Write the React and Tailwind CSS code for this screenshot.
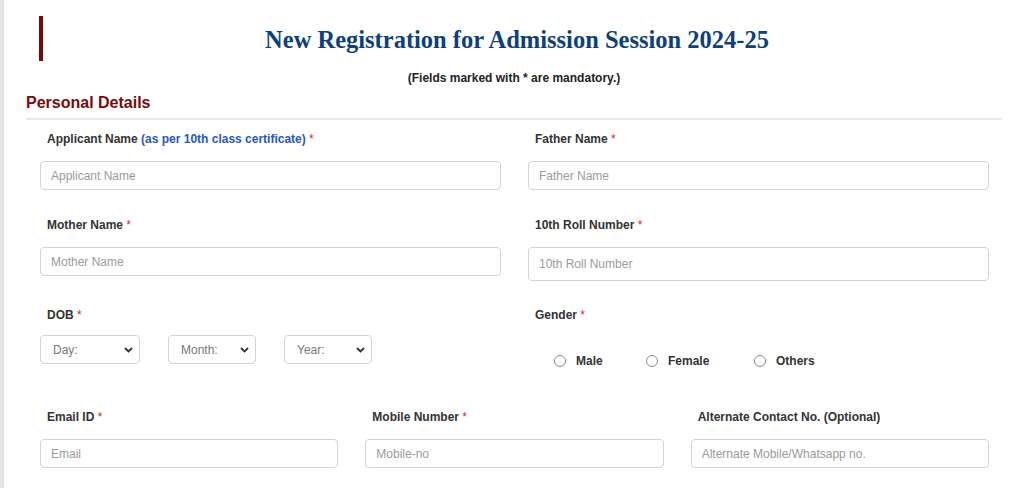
import React from 'react';

const Req = () => <span className="text-[#e02424] font-normal"> *</span>;

const Label = ({ children, className = '' }) => (
    <label className={`block pl-[7px] text-[12px] leading-[14px] font-bold text-[#333] ${className}`}>{children}</label>
);

const TextInput = ({ placeholder, className = 'h-[29px]' }) => (
    <input
        type="text"
        placeholder={placeholder}
        className={`block w-full ${className} rounded-[4px] border border-[#d4d4d4] bg-white px-[10px] text-[12px] text-[#333] placeholder:text-[#9a9a9a] outline-none`}
    />
);

const Chevron = () => (
    <svg className="pointer-events-none absolute right-[7px] top-1/2 -translate-y-1/2" width="9" height="6" viewBox="0 0 9 6">
        <path d="M1 1l3.5 3.5L8 1" fill="none" stroke="#333" strokeWidth="1.8" />
    </svg>
);

const DateSelect = ({ label, width, options }) => (
    <div className={`relative ${width}`}>
        <select className="block h-[29px] w-full appearance-none rounded-[4px] border border-[#d4d4d4] bg-white pl-[12px] text-[12px] text-[#777] outline-none">
            <option>{label}</option>
            {options.map((o) => <option key={o}>{o}</option>)}
        </select>
        <Chevron />
    </div>
);

const Radio = ({ name, label, className = '' }) => (
    <label className={`flex items-center gap-[10px] text-[12px] font-bold text-[#333] ${className}`}>
        <span className="block h-[12px] w-[12px] rounded-full border border-[#8a8a8a] bg-white"></span>
        <input type="radio" name={name} className="hidden" />
        {label}
    </label>
);

const days = Array.from({ length: 31 }, (_, i) => i + 1);
const months = ['Jan', 'Feb', 'Mar', 'Apr', 'May', 'Jun', 'Jul', 'Aug', 'Sep', 'Oct', 'Nov', 'Dec'];
const years = Array.from({ length: 20 }, (_, i) => 2012 - i);

export default function App() {
    return (
        <div className="min-h-[488px] bg-white border-l-4 border-[#e3e5e9]" style={{ fontFamily: '"Liberation Sans", Arial, sans-serif' }}>
            {/* Encabezado */}
            <div className="flex items-start pt-[16px]">
                <div className="ml-[35px] h-[45px] w-[4px] bg-[#7a0a0a]"></div>
                <h1
                    className="flex-1 pr-[33px] pt-[9px] text-center text-[24.5px] leading-[30px] font-bold text-[#0d3f7f]"
                    style={{ fontFamily: '"Liberation Serif", "Times New Roman", serif' }}
                >
                    New Registration for Admission Session 2024-25
                </h1>
            </div>
            <p className="mt-[10px] text-center text-[12px] leading-[14px] font-bold text-[#222]">(Fields marked with * are mandatory.)</p>

            <div className="mx-[22px] mt-[9px]">
                <h2 className="text-[16px] leading-[18px] font-bold text-[#7a0a0a]">Personal Details</h2>
                <div className="mt-[6px] h-[2px] bg-[#e8e8e8]"></div>
            </div>

            <div className="ml-[36px] w-[949px]">
                {/* Fila 1 */}
                <div className="mt-[12px] grid grid-cols-2 gap-x-[27px]">
                    <div>
                        <Label>Applicant Name <span className="text-[#2754d0]">(as per 10th class certificate)</span><Req /></Label>
                        <div className="mt-[15px]"><TextInput placeholder="Applicant Name" /></div>
                    </div>
                    <div>
                        <Label>Father Name<Req /></Label>
                        <div className="mt-[15px]"><TextInput placeholder="Father Name" /></div>
                    </div>
                </div>

                {/* Fila 2 */}
                <div className="mt-[28px] grid grid-cols-2 gap-x-[27px]">
                    <div>
                        <Label>Mother Name<Req /></Label>
                        <div className="mt-[15px]"><TextInput placeholder="Mother Name" /></div>
                    </div>
                    <div>
                        <Label>10th Roll Number<Req /></Label>
                        <div className="mt-[15px]"><TextInput placeholder="10th Roll Number" className="h-[34px]" /></div>
                    </div>
                </div>

                {/* Fila 3 */}
                <div className="mt-[27px] grid grid-cols-2 gap-x-[27px]">
                    <div>
                        <Label>DOB<Req /></Label>
                        <div className="mt-[13px] flex gap-[28px]">
                            <DateSelect label="Day:" width="w-[100px]" options={days} />
                            <DateSelect label="Month:" width="w-[88px]" options={months} />
                            <DateSelect label="Year:" width="w-[88px]" options={years} />
                        </div>
                    </div>
                    <div>
                        <Label>Gender<Req /></Label>
                        <div className="mt-[30px] flex pl-[26px]">
                            <Radio name="gender" label="Male" className="w-[92px]" />
                            <Radio name="gender" label="Female" className="w-[108px]" />
                            <Radio name="gender" label="Others" />
                        </div>
                    </div>
                </div>

                {/* Fila 4 */}
                <div className="mt-[40px] grid grid-cols-3 gap-x-[27px]">
                    <div>
                        <Label>Email ID<Req /></Label>
                        <div className="mt-[15px]"><TextInput placeholder="Email" /></div>
                    </div>
                    <div>
                        <Label>Mobile Number<Req /></Label>
                        <div className="mt-[15px]"><TextInput placeholder="Mobile-no" /></div>
                    </div>
                    <div>
                        <Label>Alternate Contact No. (Optional)</Label>
                        <div className="mt-[15px]"><TextInput placeholder="Alternate Mobile/Whatsapp no." /></div>
                    </div>
                </div>
            </div>
        </div>
    );
}
